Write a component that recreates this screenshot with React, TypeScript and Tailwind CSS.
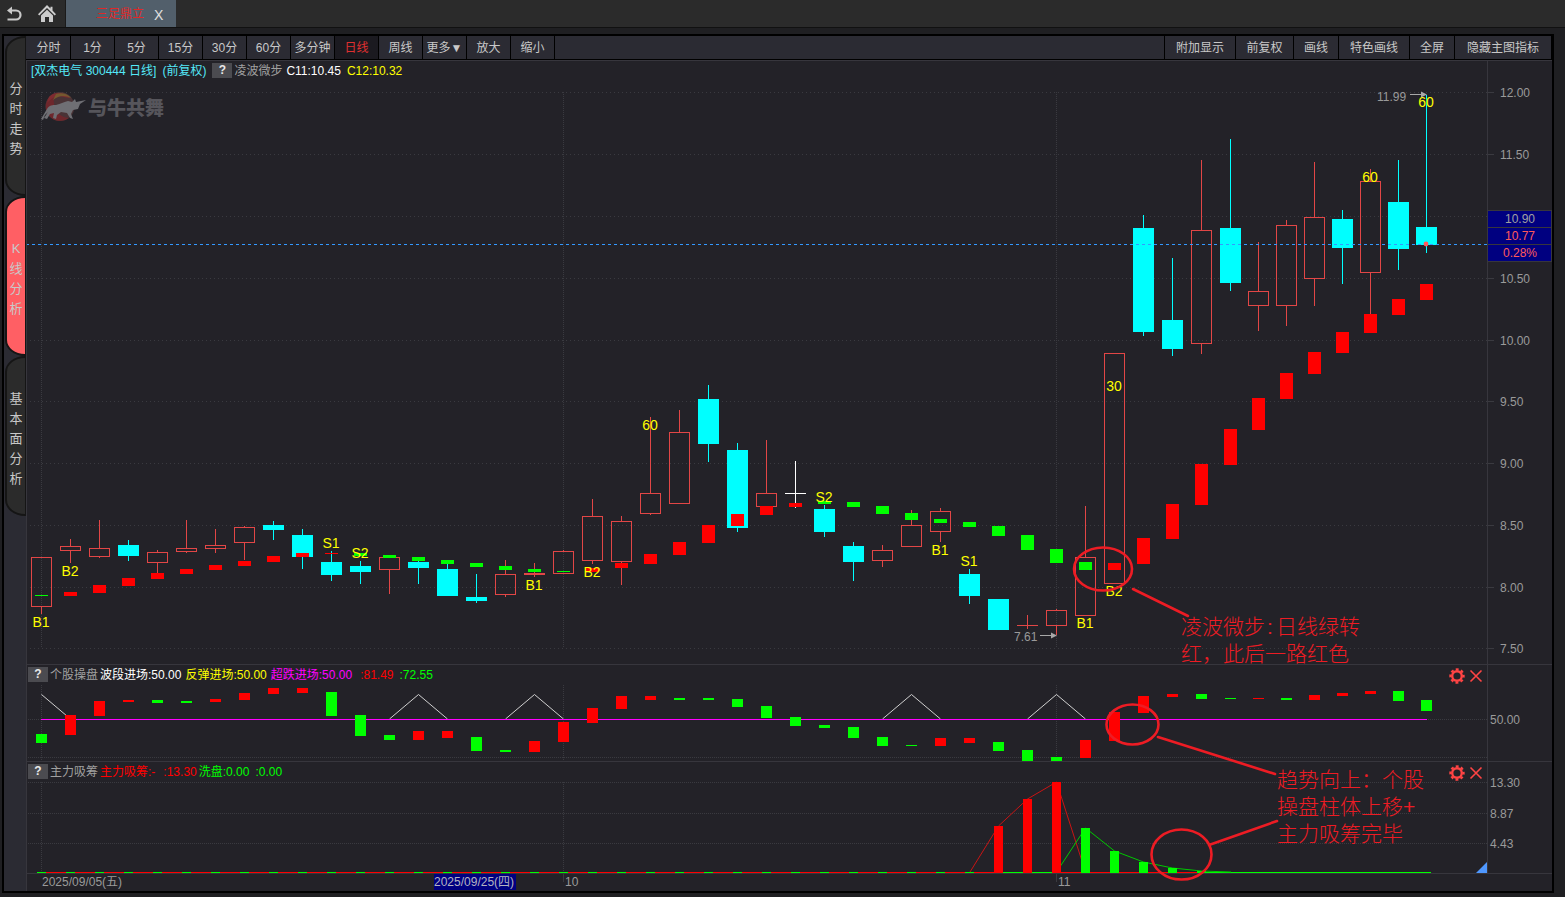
import React from 'react';
import clsx from 'clsx';

// kind: r = rising (hollow), c = falling (filled), d = flat white, x = flat red
type Candle = [kind: 'r' | 'c' | 'd' | 'x', high: number, top: number, bottom: number, low: number];
type Block = [color: 'r' | 'g', top: number, bottom: number];

const RED = '#ff0000';
const GREEN = '#00ff00';
const CANDLE_RED = '#e24646';
const CYAN = '#00ffff';
const GRID = '#3a3a40';
const AXIS_TEXT = '#9a9a9a';
const MARK = '#ed1c24';

const CANDLES: Candle[] = [
  ['r', 557, 557, 607, 614],
  ['r', 539, 546, 551, 563],
  ['r', 520, 548, 557, 558],
  ['c', 540, 545, 556, 561],
  ['r', 550, 552, 563, 573],
  ['r', 520, 548, 552, 553],
  ['r', 529, 545, 549, 553],
  ['r', 526, 527, 543, 560],
  ['c', 521, 525, 530, 540],
  ['c', 529, 535, 557, 569],
  ['c', 551, 562, 575, 581],
  ['c', 561, 566, 572, 584],
  ['r', 557, 557, 570, 594],
  ['c', 560, 562, 568, 584],
  ['c', 563, 569, 596, 596],
  ['c', 574, 597, 601, 603],
  ['r', 560, 574, 595, 597],
  ['r', 563, 573, 575, 577],
  ['r', 550, 551, 574, 574],
  ['r', 499, 516, 561, 564],
  ['r', 516, 521, 562, 585],
  ['r', 417, 493, 514, 515],
  ['r', 410, 432, 504, 504],
  ['c', 385, 399, 444, 462],
  ['c', 443, 450, 528, 532],
  ['r', 440, 493, 507, 507],
  ['d', 461, 493, 494, 508],
  ['c', 505, 509, 532, 537],
  ['c', 542, 546, 562, 581],
  ['r', 545, 550, 561, 567],
  ['r', 510, 525, 547, 547],
  ['r', 508, 511, 532, 542],
  ['c', 569, 574, 596, 604],
  ['c', 599, 599, 630, 630],
  ['x', 615, 625, 626, 629],
  ['r', 609, 610, 626, 635],
  ['r', 506, 557, 616, 616],
  ['r', 353, 353, 584, 584],
  ['c', 215, 228, 332, 336],
  ['c', 258, 320, 349, 356],
  ['r', 160, 230, 344, 354],
  ['c', 139, 228, 283, 291],
  ['r', 242, 291, 306, 331],
  ['r', 220, 225, 306, 326],
  ['r', 162, 217, 279, 306],
  ['c', 210, 219, 248, 284],
  ['r', 169, 181, 273, 314],
  ['c', 160, 202, 249, 270],
  ['c', 95, 227, 245, 253],
];

const TREND: Block[] = [
  ['g', 595, 596], ['r', 592, 596], ['r', 585, 593], ['r', 578, 586], ['r', 573, 579],
  ['r', 569, 574], ['r', 565, 570], ['r', 561, 566], ['r', 556, 562], ['r', 553, 557],
  ['r', 553, 554], ['g', 553, 556], ['g', 555, 558], ['g', 557, 561], ['g', 560, 564],
  ['g', 563, 567], ['g', 566, 570], ['g', 569, 572], ['g', 571, 572], ['r', 568, 572],
  ['r', 563, 568], ['r', 554, 564], ['r', 542, 555], ['r', 525, 543], ['r', 514, 526],
  ['r', 506, 515], ['r', 503, 507], ['g', 501, 504], ['g', 502, 507], ['g', 506, 514],
  ['g', 513, 520], ['g', 519, 523], ['g', 522, 527], ['g', 526, 536], ['g', 535, 550],
  ['g', 549, 563], ['g', 562, 570], ['r', 563, 570], ['r', 538, 564], ['r', 504, 539],
  ['r', 464, 505], ['r', 429, 465], ['r', 398, 430], ['r', 373, 399], ['r', 352, 374],
  ['r', 332, 353], ['r', 314, 333], ['r', 299, 315], ['r', 284, 300],
];

const SWING: Block[] = [
  ['g', 734, 743], ['r', 715, 735], ['r', 701, 716], ['r', 700, 702], ['g', 700, 703],
  ['g', 701, 703], ['r', 699, 702], ['r', 693, 700], ['r', 688, 694], ['r', 688, 693],
  ['g', 692, 716], ['g', 715, 736], ['g', 735, 740], ['r', 731, 740], ['r', 731, 738],
  ['g', 737, 751], ['g', 750, 752], ['r', 741, 752], ['r', 722, 742], ['r', 708, 723],
  ['r', 696, 709], ['r', 696, 700], ['g', 698, 700], ['g', 698, 700], ['g', 699, 707],
  ['g', 706, 718], ['g', 717, 726], ['g', 725, 728], ['g', 727, 738], ['g', 737, 746],
  ['g', 745, 746], ['r', 738, 746], ['r', 738, 743], ['g', 742, 751], ['g', 750, 761],
  ['g', 757, 761], ['r', 740, 758], ['r', 712, 741], ['r', 696, 713], ['r', 694, 697],
  ['g', 694, 699], ['g', 698, 699], ['r', 698, 699], ['g', 698, 700], ['r', 695, 700],
  ['r', 693, 696], ['r', 691, 694], ['g', 691, 701], ['g', 700, 711],
];

const SIGNALS: [index: number, text: string, y: number][] = [
  [0, 'B1', 627], [1, 'B2', 576], [10, 'S1', 548], [11, 'S2', 558], [17, 'B1', 590],
  [19, 'B2', 577], [21, '60', 430], [27, 'S2', 502], [31, 'B1', 555], [32, 'S1', 566],
  [36, 'B1', 628], [37, 'B2', 596], [37, '30', 391], [46, '60', 182], [48, '60', 107],
];

const PRICES: [label: string, y: number][] = [
  ['12.00', 93], ['11.50', 155], ['', 217], ['10.50', 279], ['10.00', 341],
  ['9.50', 402], ['9.00', 464], ['8.50', 526], ['8.00', 588], ['7.50', 649],
];

const VOLUME_RED: [number, number][] = [[33, 826], [34, 799], [35, 782]];
const VOLUME_GREEN: [number, number][] = [[36, 828], [37, 851], [38, 862], [39, 868], [40, 871]];

const PERIODS = ['分时', '1分', '5分', '15分', '30分', '60分', '多分钟', '日线', '周线', '更多▼', '放大', '缩小'];

const TOOLS = [
  { label: '附加显示', width: 'w-[71px]' },
  { label: '前复权', width: 'w-[58px]' },
  { label: '画线', width: 'w-[45px]' },
  { label: '特色画线', width: 'w-[71px]' },
  { label: '全屏', width: 'w-[45px]' },
  { label: '隐藏主图指标', width: 'w-[97px]' },
];

const MONTH_STARTS = [0, 18, 35];

// bars sit 29px apart, the most recent ones 28px
function cx(i: number): number {
  return i <= 41 ? 41 + i * 29 : 1230 + (i - 41) * 28;
}

function fillOf(c: 'r' | 'g'): string {
  return c === 'r' ? RED : GREEN;
}

function Header() {
  return (
    <header className="flex h-7 items-stretch border-b border-[#111111] bg-[#2b2b2b]">
      <button type="button" aria-label="返回" className="flex w-7 items-center justify-center">
        <svg width="16" height="16" viewBox="0 0 16 16" fill="none" stroke="#c8c8c8" strokeWidth="2.2">
          <path d="M4 4.5h6a4.4 4.4 0 0 1 0 9H1.5" />
          <path d="M6 .5v8l-5-4z" fill="#c8c8c8" stroke="none" />
        </svg>
      </button>
      <button type="button" aria-label="首页" className="flex w-[38px] items-center justify-center border-r border-[#1a1a1a]">
        <svg width="18" height="18" viewBox="0 0 18 18" fill="#cccccc">
          <path d="M9 0 12.5 3.6V1.8h2v3.8L18 9.2l-1.3 1.2L9 3 1.3 10.4 0 9.2z" />
          <path d="M9 4.8 15 10.5V17h-4v-5H7v5H3v-6.5z" />
        </svg>
      </button>
      <div className="flex w-[110px] items-center bg-[#525f6b] pl-[30px]">
        <span className="text-xs text-[#e02828]">三足鼎立</span>
        <button type="button" aria-label="关闭标签" className="ml-2.5 pt-0.5 text-sm leading-4 text-[#e0e0e0]">
          X
        </button>
      </div>
    </header>
  );
}

function SideTab({ label, active }: { label: string; active?: boolean }) {
  return (
    <button type="button" className="block h-40 w-full text-[#c8c8c8]">
      <span
        className={clsx(
          'ml-px flex h-full items-center justify-center rounded-tl-[20px_16px] rounded-bl-[20px_16px] border-2 border-r border-[#151515] pt-1.5',
          active ? 'bg-[#ff5f64]' : 'bg-[#2b2b2b]',
        )}
      >
        <span className="w-[13px] text-center text-[13px] leading-5 break-all">{label}</span>
      </span>
    </button>
  );
}

function Toolbar() {
  return (
    <div className="flex h-6 items-stretch border-b border-black bg-[#2b2b33] pl-px text-xs text-[#c8c8c8]">
      {PERIODS.map((p) => (
        <button
          key={p}
          type="button"
          className={clsx(
            'w-11 border-r border-black whitespace-nowrap',
            p === '日线' && 'bg-[#1b1a20] text-[#e03030]',
          )}
        >
          {p}
        </button>
      ))}
      <div className="ml-auto flex">
        {TOOLS.map((t) => (
          <button key={t.label} type="button" className={clsx('border-l border-black whitespace-nowrap', t.width)}>
            {t.label}
          </button>
        ))}
        <span className="w-px bg-black" />
      </div>
    </div>
  );
}

function HelpButton() {
  return (
    <button type="button" aria-label="指标说明" className="h-[15px] w-5 bg-[#4b4b50] text-xs leading-[15px] font-bold text-[#e8e8e8]">
      ?
    </button>
  );
}

function PaneHead({ children, tools }: { children: React.ReactNode; tools?: boolean }) {
  return (
    <div className="flex h-[19px] items-stretch text-xs">
      <div className="flex flex-1 items-center pl-px whitespace-nowrap">{children}</div>
      {tools ? (
        <div className="flex items-center gap-1 pt-0.5 pr-1 text-[#ff4444]">
          <button type="button" aria-label="设置">
            <svg width="16" height="16" viewBox="0 0 16 16" fill="none" stroke="currentColor">
              <circle cx="8" cy="8" r="4.8" strokeWidth="2.4" />
              <circle cx="8" cy="8" r="6.6" strokeWidth="2.2" strokeDasharray="2.9 2.28" strokeDashoffset="1.45" />
            </svg>
          </button>
          <button type="button" aria-label="关闭">
            <svg width="14" height="14" viewBox="0 0 14 14" stroke="currentColor" strokeWidth="1.6">
              <path d="M1.5 1.5l11 11M12.5 1.5l-11 11" />
            </svg>
          </button>
        </div>
      ) : null}
      <div className="w-[65px] border-l border-[#37363d]" />
    </div>
  );
}

function MonthLines({ from, to }: { from: number; to: number }) {
  return (
    <>
      {MONTH_STARTS.map((i) => (
        <line key={i} x1={cx(i) + 0.5} x2={cx(i) + 0.5} y1={from} y2={to} stroke={GRID} strokeDasharray="1 1" />
      ))}
    </>
  );
}

function CandleShape({ i, candle }: { i: number; candle: Candle }) {
  const [kind, high, top, bottom, low] = candle;
  const x = cx(i);
  if (kind === 'd' || kind === 'x') {
    const color = kind === 'd' ? '#ffffff' : CANDLE_RED;
    return (
      <g fill={color}>
        <rect x={x} y={high} width={1} height={low - high} />
        <rect x={x - 10} y={top} width={21} height={1} />
      </g>
    );
  }
  if (kind === 'c') {
    return (
      <g fill={CYAN}>
        <rect x={x} y={high} width={1} height={low - high} />
        <rect x={x - 10} y={top} width={21} height={bottom - top} />
      </g>
    );
  }
  return (
    <g fill={CANDLE_RED}>
      <rect x={x} y={high} width={1} height={top - high} />
      <rect x={x} y={bottom} width={1} height={low - bottom} />
      <rect x={x - 9.5} y={top + 0.5} width={20} height={bottom - top - 1} fill="none" stroke={CANDLE_RED} />
    </g>
  );
}

function Watermark() {
  return (
    <g>
      <circle cx="60" cy="106.5" r="14.5" fill="#4a3336" />
      <path d="M55 93a14.5 14.5 0 0 0 4 28c4 0 7-1 10-3-12-1-18-12-14-25z" fill="#6e272c" />
      <path d="M49 97c5-6 15-5 21 1l-6-1c-7-2-12 1-17 6z" fill="#7e2b30" />
      <path d="M56 94c6-2 12 0 15 4-6-3-12-3-18 2z" fill="#75582f" />
      <path
        d="M47 109c2-4 6-4 9-4 5-1 7-3 12-4l4 1 3-3 1 3 10-2-6 4-2 5-5 1-2 4 2 5-3-1-3-5-6-1-4 3-1 4-3-1 1-5-4 1-3 5-3-1 4-6-3 3-2 5-2-1z"
        fill="#6f6f74"
      />
      <text x="88" y="115" fontSize="19" fontWeight="900" fill="#56555b">
        与牛共舞
      </text>
    </g>
  );
}

function PriceChart() {
  return (
    <svg viewBox="27 80 1525 584" className="block w-full" role="img" aria-label="日线K线图">
      <g shapeRendering="crispEdges">
        {PRICES.map(([, y]) => (
          <g key={y}>
            <line x1="30" x2="1487" y1={y - 0.5} y2={y - 0.5} stroke={GRID} strokeDasharray="1 3" />
            <line x1="1488" x2="1494" y1={y - 0.5} y2={y - 0.5} stroke={GRID} />
          </g>
        ))}
        <MonthLines from={92} to={648} />
        <line x1="1487.5" x2="1487.5" y1="80" y2="664" stroke="#37363d" />
      </g>
      <Watermark />
      <g shapeRendering="crispEdges">
        {CANDLES.map((c, i) => (
          <CandleShape key={i} i={i} candle={c} />
        ))}
        {TREND.map(([color, top, bottom], i) => (
          <rect key={i} x={cx(i) - 6} y={top} width={13} height={bottom - top} fill={fillOf(color)} />
        ))}
        <line x1="26" x2="1487" y1="244.5" y2="244.5" stroke="#3399ff" strokeDasharray="3 3" />
      </g>
      <circle cx="1426" cy="244" r="2.4" fill="#ff5a5a" />

      <g fontSize="14" fill="#ffff00" textAnchor="middle">
        {SIGNALS.map(([i, text, y]) => (
          <text key={`${i}-${text}`} x={cx(i)} y={y}>
            {text}
          </text>
        ))}
      </g>

      <g fontSize="12" fill={AXIS_TEXT}>
        <text x="1377" y="101">11.99</text>
        <text x="1014" y="641">7.61</text>
        {PRICES.map(([label, y]) => (
          <text key={y} x="1500" y={y + 4}>
            {label}
          </text>
        ))}
      </g>
      <g fill="#a8a8a8">
        <path d="M1410 94h11v-2.5l6 3-6 3v-2.5h-11z" />
        <path d="M1040 635h11v-2.5l6 3-6 3v-2.5h-11z" />
      </g>

      <g shapeRendering="crispEdges" fill="#000080" stroke="#37363d">
        <rect x="1487.5" y="210.5" width="64" height="17" />
        <rect x="1487.5" y="227.5" width="64" height="17" />
        <rect x="1487.5" y="244.5" width="64" height="17" />
      </g>
      <g fontSize="12" textAnchor="middle">
        <text x="1520" y="223" fill="#a0a0a0">10.90</text>
        <text x="1520" y="240" fill="#ff5a5a">10.77</text>
        <text x="1520" y="257" fill="#ff5a5a">0.28%</text>
      </g>
    </svg>
  );
}

function SwingChart() {
  return (
    <svg viewBox="27 684 1525 77" className="block w-full" role="img" aria-label="个股操盘">
      <g shapeRendering="crispEdges">
        <line x1="28" x2="1487" y1="719.5" y2="719.5" stroke={GRID} strokeDasharray="1 1" />
        <line x1="28" x2="1487" y1="757.5" y2="757.5" stroke={GRID} strokeDasharray="1 1" />
        <MonthLines from={685} to={760} />
        <line x1="1487.5" x2="1487.5" y1="684" y2="761" stroke="#37363d" />
      </g>
      <g fill="none" stroke="#d0d0d0">
        <path d="M41.5 694.5 70.5 719" />
        {[13, 17, 30, 35].map((i) => (
          <path key={i} d={`M${cx(i - 1) + 0.5} 719 ${cx(i) + 0.5} 694.5 ${cx(i + 1) + 0.5} 719`} />
        ))}
      </g>
      <g shapeRendering="crispEdges">
        <line x1="41" x2="1427" y1="719.5" y2="719.5" stroke="#ff00ff" />
        {SWING.map(([color, top, bottom], i) => (
          <rect key={i} x={cx(i) - 5} y={top} width={11} height={bottom - top} fill={fillOf(color)} />
        ))}
      </g>
      <text x="1490" y="724" fontSize="12" fill={AXIS_TEXT}>50.00</text>
    </svg>
  );
}

function VolumeChart() {
  return (
    <svg viewBox="27 781 1525 92" className="block w-full overflow-visible" role="img" aria-label="主力吸筹">
      <g shapeRendering="crispEdges">
        {[782, 813, 843].map((y) => (
          <line key={y} x1="28" x2="1487" y1={y + 0.5} y2={y + 0.5} stroke={GRID} strokeDasharray="1 1" />
        ))}
        <MonthLines from={782} to={873} />
        <line x1="1487.5" x2="1487.5" y1="781" y2="873" stroke="#37363d" />
        <line x1="37" x2="1210" y1="872.5" y2="872.5" stroke={RED} />
        <line x1="998" x2="1061" y1="872.5" y2="872.5" stroke={GREEN} />
        <line x1="1204" x2="1431" y1="872.5" y2="872.5" stroke={GREEN} />
        {CANDLES.slice(0, 33).map((_, i) => (
          <rect key={i} x={cx(i) - 4} y={872} width={9} height={1} fill={GREEN} />
        ))}
      </g>
      <path d="M970 872 998.5 826 1027.5 799 1056.5 782 1085.5 872" fill="none" stroke="#c81414" />
      <path d="M1056.5 872 1085.5 828 1114.5 851 1143.5 862 1172.5 868 1201.5 871 1231 872" fill="none" stroke="#00c800" />
      <g shapeRendering="crispEdges">
        {VOLUME_RED.map(([i, y]) => (
          <rect key={i} x={cx(i) - 4} y={y} width={9} height={873 - y} fill={RED} />
        ))}
        {VOLUME_GREEN.map(([i, y]) => (
          <rect key={i} x={cx(i) - 4} y={y} width={9} height={873 - y} fill={GREEN} />
        ))}
      </g>
      <path d="M1487 862v11h-11z" fill="#4f98ff" />
      <g fontSize="12" fill={AXIS_TEXT}>
        <text x="1490" y="787">13.30</text>
        <text x="1490" y="818">8.87</text>
        <text x="1490" y="848">4.43</text>
      </g>
    </svg>
  );
}

function DateAxis() {
  return (
    <svg viewBox="27 874 1525 17" className="block w-full" role="img" aria-label="日期">
      <rect x="434" y="874" width="82" height="16" fill="#000080" />
      <path d="M563.5 874v8M1056.5 874v8" stroke={GRID} />
      <g fontSize="12" fill={AXIS_TEXT}>
        <text x="42" y="886">2025/09/05(五)</text>
        <text x="434" y="886" fill="#b4b4c0">2025/09/25(四)</text>
        <text x="565" y="886">10</text>
        <text x="1058" y="886">11</text>
      </g>
    </svg>
  );
}

// hand-drawn remarks that cross all panes
function Remarks() {
  return (
    <svg viewBox="27 61 1525 830" className="pointer-events-none absolute inset-x-0 top-0 block w-full">
      <g fill="none" stroke={MARK} strokeWidth="2.6" strokeLinecap="round">
        <ellipse cx="1103" cy="569" rx="29" ry="21.5" />
        <path d="M1133 589 1188 616" />
        <ellipse cx="1132.5" cy="724.5" rx="26" ry="20" />
        <path d="M1158 737 1275 774" />
        <ellipse cx="1181.5" cy="854.5" rx="30" ry="25" />
        <path d="M1209 845 1277 821" />
      </g>
      <g fontSize="21" fontWeight="300" fill={MARK}>
        <text x="1181" y="634">凌波微步</text>
        <text x="1267" y="634">:</text>
        <text x="1276" y="634">日线绿转</text>
        <text x="1181" y="661">红，此后一路红色</text>
        <text x="1277" y="787">趋势向上：个股</text>
        <text x="1277" y="814">操盘柱体上移+</text>
        <text x="1277" y="841">主力吸筹完毕</text>
      </g>
    </svg>
  );
}

export default function App() {
  return (
    <div className="min-h-screen bg-[#1f1f22] pb-1 font-['Liberation_Sans','Noto_Sans_CJK_SC',sans-serif]">
      <Header />
      <div className="flex pt-1.5 pr-[11px] pl-0.5">
        <div className="flex min-w-0 flex-1 border-2 border-black bg-[#232228]">
          <nav className="flex w-[22px] flex-col bg-[#2b2b33]">
            <SideTab label="分时走势" />
            <SideTab label="K线分析" active />
            <SideTab label="基本面分析" />
          </nav>
          <main className="min-w-0 flex-1">
            <Toolbar />
            <div className="border-t border-l border-[#37363d]">
              <div className="relative">
                <PaneHead>
                  <span className="ml-[3px] text-[#54e8f8]">[双杰电气 300444 日线]</span>
                  <span className="ml-1.5 text-[#54e8f8]">(前复权)</span>
                  <span className="mr-0.5 ml-1.5 flex">
                    <HelpButton />
                  </span>
                  <span className="text-[#a0a0a0]">凌波微步</span>
                  <span className="ml-1 text-white">C11:10.45</span>
                  <span className="ml-1.5 text-[#ffff00]">C12:10.32</span>
                </PaneHead>
                <PriceChart />
                <section className="border-t border-[#37363d]">
                  <PaneHead tools>
                    <HelpButton />
                    <span className="ml-0.5 text-[#a0a0a0]">个股操盘</span>
                    <span className="ml-0.5 text-white">波段进场:50.00</span>
                    <span className="ml-1 text-[#ffff00]">反弹进场:50.00</span>
                    <span className="ml-1 text-[#ff00ff]">超跌进场:50.00</span>
                    <span className="ml-2 text-[#ff0000]">:81.49</span>
                    <span className="ml-1.5 text-[#00ff00]">:72.55</span>
                  </PaneHead>
                  <SwingChart />
                </section>
                <section className="border-t border-[#37363d]">
                  <PaneHead tools>
                    <HelpButton />
                    <span className="ml-0.5 text-[#a0a0a0]">主力吸筹</span>
                    <span className="ml-0.5 text-[#ff0000]">主力吸筹:-</span>
                    <span className="ml-2 text-[#ff0000]">:13.30</span>
                    <span className="ml-0.5 text-[#00ff00]">洗盘:0.00</span>
                    <span className="ml-1.5 text-[#00ff00]">:0.00</span>
                  </PaneHead>
                  <VolumeChart />
                </section>
                <div className="border-t border-[#37363d]">
                  <DateAxis />
                </div>
                <Remarks />
              </div>
            </div>
          </main>
        </div>
      </div>
    </div>
  );
}
